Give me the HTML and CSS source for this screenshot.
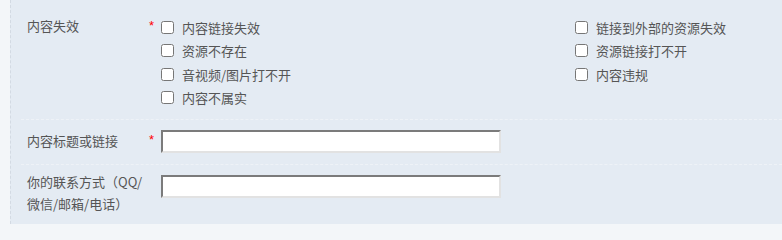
FILE: index.html
```html
<!DOCTYPE html>
<html lang="zh-CN">
<head>
<meta charset="utf-8">
<title>反馈</title>
<link rel="stylesheet" href="styles.css">
</head>
<body>
<div class="panel">
  <div class="row row-check">
    <div class="label">内容失效</div>
    <div class="req">*</div>
    <div class="options">
      <label class="opt"><input type="checkbox"><span>内容链接失效</span></label>
      <label class="opt"><input type="checkbox"><span>链接到外部的资源失效</span></label>
      <label class="opt"><input type="checkbox"><span>资源不存在</span></label>
      <label class="opt"><input type="checkbox"><span>资源链接打不开</span></label>
      <label class="opt"><input type="checkbox"><span>音视频/图片打不开</span></label>
      <label class="opt"><input type="checkbox"><span>内容违规</span></label>
      <label class="opt"><input type="checkbox"><span>内容不属实</span></label>
    </div>
  </div>
  <div class="row row-input">
    <div class="label">内容标题或链接</div>
    <div class="req">*</div>
    <div><input class="text" type="text"></div>
  </div>
  <div class="row row-input row-last">
    <div class="label label-wrap">你的联系方式（QQ/<br>微信/邮箱/电话）</div>
    <div class="req"></div>
    <div><input class="text" type="text"></div>
  </div>
</div>
</body>
</html>
```

FILE: styles.css
```css
html, body {
  margin: 0;
  padding: 0;
}
body {
  background: #f3f6f9;
  font-family: "Noto Sans CJK SC", "Microsoft YaHei", sans-serif;
  font-size: 13px;
  color: #555;
  height: 224px;
  overflow: hidden;
}
.panel {
  margin-left: 10px;
  border-left: 1px dashed #d3dae3;
  background: #e4ebf3;
  height: 224px;
  padding-left: 10px;
  overflow: hidden;
}
.row {
  display: grid;
  grid-template-columns: 128px 12px 1fr;
  border-bottom: 1px dashed #eef2f7;
}
.row-check {
  padding: 16px 0 10px;
}
.row-input {
  padding: 10px 0 11px;
}
.row-last {
  border-bottom: none;
  padding-top: 10px;
}
.label {
  padding-left: 6px;
  line-height: 22px;
  white-space: nowrap;
}
.row-check .label {
  line-height: 20px;
  padding-top: 0;
}
.label-wrap {
  line-height: 22px;
  margin-top: -4px;
}
.req {
  color: #f00;
  font-size: 13px;
  line-height: 23px;
  font-family: "Liberation Sans", sans-serif;
  margin-top: -2px;
}
.options {
  display: grid;
  grid-template-columns: 414px 1fr;
}
.opt {
  display: flex;
  align-items: center;
  height: 23.3px;
  white-space: nowrap;
}
.opt input {
  margin: 0 8px 0 0;
  width: 13px;
  height: 13px;
}
.text {
  display: block;
  box-sizing: border-box;
  width: 340px;
  height: 23px;
  margin: 0;
  background: #fff;
  border-style: solid;
  border-width: 2px;
  border-color: #7b7b7b #e2e2e2 #e2e2e2 #7b7b7b;
  padding: 0 4px;
  font: inherit;
}
```
